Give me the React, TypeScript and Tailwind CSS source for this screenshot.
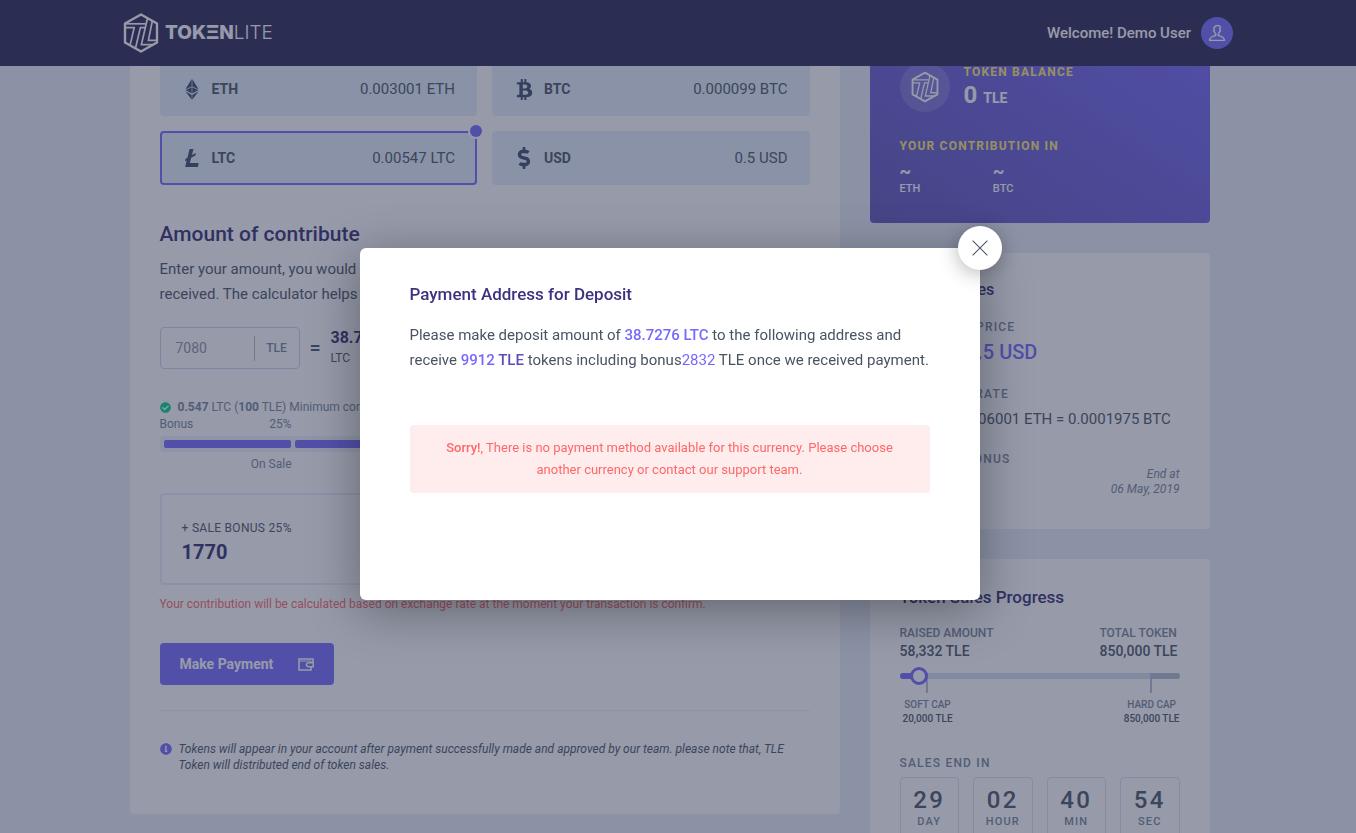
import type { ReactNode } from "react";
import { FaBtc, FaCheckCircle, FaDollarSign, FaInfoCircle } from "react-icons/fa";
import { TfiClose, TfiUser } from "react-icons/tfi";

function LogoMark({ className }: { className?: string }) {
  return (
    <svg viewBox="0 0 36 40" className={className} fill="none" stroke="currentColor" aria-hidden="true">
      <path d="M18 1.5 34 10.5V29.5L18 38.5 2 29.5V10.5Z" strokeWidth="2.4" strokeLinejoin="round" />
      <path d="M2.5 10.8H22.5" strokeWidth="1.7" />
      <path d="M2.5 14.6H11.2L7.2 31.5" strokeWidth="1.7" />
      <path d="M22 14.6H17.4L12.6 34.8" strokeWidth="1.7" />
      <path d="M24.4 5.5 18.4 31.6H30" strokeWidth="1.7" />
      <path d="M29.3 8 25.4 27.4H33.5" strokeWidth="1.7" />
    </svg>
  );
}

function EthIcon() {
  return (
    <svg viewBox="0 0 14 21" className="h-[21px] w-[14px]" fill="currentColor" aria-hidden="true">
      <path d="M6.7 0 .4 10.3 6.7 7.6ZM7.3 0V7.6L13.6 10.3ZM6.7 8.3.6 10.9 6.7 14.5ZM7.3 8.3V14.5L13.4 10.9ZM.4 12.3 6.7 16V20.8ZM13.6 12.3 7.3 16V20.8Z" />
    </svg>
  );
}

function LtcIcon() {
  return (
    <svg viewBox="0 0 14 18" className="h-[18px] w-[14px]" fill="currentColor" aria-hidden="true">
      <path d="M4.6 0H8.5L6.9 6.1 11 3.9 10.4 6.5 6.2 8.8 4.8 14H13.6L12.9 18H.2L1.7 11.4 0 12.3.6 9.7 2.4 8.7Z" />
    </svg>
  );
}

function WalletIcon() {
  return (
    <svg viewBox="0 0 16 13" className="h-[13px] w-4" fill="none" stroke="currentColor" aria-hidden="true">
      <path d="M15 4V1H1V12H13V9" strokeWidth="1.6" />
      <path d="M1 3H13V4.5" strokeWidth="1" />
      <path d="M15.2 4.8H10.5A2 2 0 0 0 10.5 8.8H15.2Z" strokeWidth="1.5" />
    </svg>
  );
}

type Option = { code: string; rate: string; icon: ReactNode; checked?: boolean };

const options: Option[] = [
  { code: "ETH", rate: "0.003001 ETH", icon: <EthIcon /> },
  { code: "BTC", rate: "0.000099 BTC", icon: <FaBtc size={21} /> },
  { code: "LTC", rate: "0.00547 LTC", icon: <LtcIcon />, checked: true },
  { code: "USD", rate: "0.5 USD", icon: <FaDollarSign size={22} /> },
];

function CurrencyOption({ code, rate, icon, checked }: Option) {
  return (
    <label
      className={`relative flex h-[54px] items-center gap-2 rounded bg-[#e6effb] pr-[22px] pl-5 ${
        checked ? "shadow-[inset_0_0_0_2px_#7668fe]" : ""
      }`}
    >
      <input type="radio" name="currency" defaultChecked={checked} className="sr-only" />
      <span className="flex w-6 justify-center text-[#3d4a68]">{icon}</span>
      <span className="text-sm font-bold text-[#495463]">{code}</span>
      <span className="ml-auto text-[15px] text-[#495463]">{rate}</span>
      {checked && (
        <span className="absolute -top-1.5 -right-[5px] size-3 rounded-full bg-[#7668fe] shadow-[0_0_0_2px_#fff]" />
      )}
    </label>
  );
}

function Caption({ children }: { children: ReactNode }) {
  return <h3 className="text-xs leading-5 font-medium tracking-widest text-[#758698] uppercase">{children}</h3>;
}

const countdown = [
  ["29", "Day"],
  ["02", "Hour"],
  ["40", "Min"],
  ["54", "Sec"],
];

function Header() {
  return (
    <header className="fixed inset-x-0 top-0 z-10 h-[66px] bg-[#2b2552]">
      <div className="mx-auto flex h-full max-w-[1110px] items-center justify-between">
        <a href="#" className="flex items-center text-white">
          <LogoMark className="h-10 w-9" />
          <span className="ml-1.5 font-[Inter,sans-serif] text-[19px] leading-6">
            <span className="font-extrabold">TOKΞN</span>
            <span className="font-light">LITE</span>
          </span>
        </a>
        <button type="button" className="flex items-center gap-2.5 text-[15px] font-medium text-white">
          <span>Welcome! Demo User</span>
          <span className="flex size-8 items-center justify-center rounded-full bg-[#7668fe]">
            <TfiUser size={16} stroke="currentColor" strokeWidth="0.6" />
          </span>
        </button>
      </div>
    </header>
  );
}

function ContributeCard() {
  return (
    <section className="rounded bg-white px-[30px] pt-[62px] pb-[41px]">
      <div className="grid grid-cols-2 gap-[15px]">
        {options.map((o) => (
          <CurrencyOption key={o.code} {...o} />
        ))}
      </div>

      <h2 className="mt-9 text-[21px] leading-[26px] font-medium text-[#342d6e]">Amount of contribute</h2>
      <p className="mt-2.5 text-[15px] leading-[25px]">
        Enter your amount, you would like to contribute and calculate the amount of token you will received. The
        calculator helps to convert required currency to tokens.
      </p>

      <div className="mt-5 flex h-[42px] items-center">
        <label className="flex h-full w-[140px] items-center rounded border border-[#ccd4ee]">
          <input
            type="text"
            defaultValue="7080"
            className="h-full w-[93px] min-w-0 bg-transparent pl-[15px] text-sm text-[#8b92a5] outline-none"
          />
          <span className="flex h-[25px] flex-1 items-center justify-center border-l border-[#b1becc] text-xs font-medium text-[#758698]">
            TLE
          </span>
        </label>
        <span className="w-[31px] text-center text-xl font-medium text-[#495463]">=</span>
        <div>
          <p className="text-base leading-5 font-bold text-[#342d6e]">38.7276</p>
          <p className="text-xs leading-5">LTC</p>
        </div>
      </div>

      <p className="mt-[30px] flex items-center text-xs leading-4 text-[#758698]">
        <FaCheckCircle size={11} className="mr-[7px] text-[#00d285]" />
        <span>
          <b className="font-bold">0.547</b> LTC (<b className="font-bold">100</b> TLE) Minimum contribution amount is
          required.
        </span>
      </p>

      <div className="text-xs text-[#758698]">
        <div className="flex w-[132px] justify-between py-px leading-4">
          <span>Bonus</span>
          <span>25%</span>
        </div>
        <div className="mt-[3px] flex gap-1 rounded-sm bg-[#eff1f9] p-1">
          <span className="h-2 w-[127px] rounded-xs bg-[#7668fe]" />
          <span className="h-2 flex-1 rounded-xs bg-[#7668fe]" />
        </div>
        <p className="mt-1 w-[132px] text-right leading-4">On Sale</p>
      </div>

      <div className="mt-[21px] rounded border-2 border-[#e6effb] px-5 pt-[22px] pb-[18px]">
        <p className="text-xs leading-[22px] tracking-wide text-[#495463]">+ SALE BONUS 25%</p>
        <p className="text-xl leading-[26px] font-bold text-[#342d6e]">1770</p>
      </div>
      <p className="mt-[9px] text-xs leading-5 text-[#ff6868]">
        Your contribution will be calculated based on exchange rate at the moment your transaction is confirm.
      </p>

      <button
        type="button"
        className="mt-[29px] flex h-[42px] w-[174px] items-center justify-between rounded bg-[#7668fe] px-5 text-sm font-bold text-white"
      >
        Make Payment
        <WalletIcon />
      </button>

      <hr className="mt-[25px] border-[#e6effb]" />
      <p className="mt-[30px] flex gap-[7px] text-xs leading-4 italic">
        <FaInfoCircle size={12} className="mt-0.5 shrink-0 text-[#7668fe]" />
        <span>
          Tokens will appear in your account after payment successfully made and approved by our team. please note
          that, TLE Token will distributed end of token sales.
        </span>
      </p>
    </section>
  );
}

function BalanceCard() {
  return (
    <section className="rounded bg-linear-to-tr from-[#5f54b8] to-[#7668fe] px-[30px] pt-[62px] pb-[26px] text-white">
      <div className="flex items-center gap-3.5">
        <span className="flex size-[50px] items-center justify-center rounded-full bg-white/15">
          <LogoMark className="h-8 w-7" />
        </span>
        <div className="pb-1">
          <h2 className="text-xs leading-5 font-bold tracking-widest text-[#ffeb70]">TOKEN BALANCE</h2>
          <p className="text-2xl leading-[26px] font-bold">
            0 <span className="text-sm">TLE</span>
          </p>
        </div>
      </div>
      <h2 className="mt-6 text-xs leading-5 font-bold tracking-widest text-[#ffeb70]">YOUR CONTRIBUTION IN</h2>
      <div className="mt-[5px] grid grid-cols-3">
        {["ETH", "BTC"].map((c) => (
          <p key={c} className="text-[11px] leading-4 font-medium">
            <span className="block text-lg leading-5 font-bold">~</span>
            {c}
          </p>
        ))}
      </div>
    </section>
  );
}

function SalesCard() {
  return (
    <section className="rounded bg-white px-[30px] pt-[25px] pb-8">
      <h2 className="text-base leading-6 font-medium text-[#342d6e]">Tokens Sales</h2>
      <div className="mt-[15px]">
        <Caption>TLE Token Price</Caption>
        <p className="text-xl leading-[30px] font-medium text-[#7668fe]">1 TLE =0.5 USD</p>
      </div>
      <div className="mt-[17px]">
        <Caption>Exchange Rate</Caption>
        <p className="mt-0.5 text-[15px] leading-[26px]">1 TLE =0.0006001 ETH = 0.0001975 BTC</p>
      </div>
      <div className="mt-[17px]">
        <Caption>Current Bonus</Caption>
        <div className="-mt-0.5 flex items-center justify-between">
          <span className="text-xl font-medium text-[#7668fe]">25%</span>
          <span className="text-right text-xs leading-[15px] text-[#758698] italic">
            End at
            <br />
            06 May, 2019
          </span>
        </div>
      </div>
    </section>
  );
}

function ProgressCard() {
  return (
    <section className="rounded bg-white px-[30px] pt-[25px] pb-[30px]">
      <h2 className="text-[17px] leading-[26px] font-medium text-[#342d6e]">Token Sales Progress</h2>
      <div className="mt-3.5 flex justify-between pr-0.5 text-sm leading-[18px] font-medium">
        <p>
          <span className="block text-xs leading-[18px] text-[#758698]">RAISED AMOUNT</span>
          58,332 TLE
        </p>
        <p>
          <span className="block text-xs leading-[18px] text-[#758698]">TOTAL TOKEN</span>
          850,000 TLE
        </p>
      </div>
      <div className="relative mt-[13px] flex h-1.5 rounded-full bg-[#d5dfec]">
        <span className="w-[19px] rounded-l-full bg-[#7668fe]" />
        <span className="ml-auto w-[29px] rounded-r-full bg-[#b1becc]" />
        <span className="absolute top-0 left-[26px] h-5 w-0.5 bg-[#b7bdd4]" />
        <span className="absolute top-0 right-7 h-5 w-0.5 bg-[#b7bdd4]" />
        <span className="absolute -top-1.5 left-2.5 size-[18px] rounded-full border-3 border-[#7668fe] bg-white" />
      </div>
      <div className="mt-[19px] flex justify-between pl-[3px] text-center text-[10px] leading-3.5 font-medium">
        <p>
          <span className="block text-[#758698]">SOFT CAP</span>
          20,000 TLE
        </p>
        <p>
          <span className="block text-[#758698]">HARD CAP</span>
          850,000 TLE
        </p>
      </div>
      <div className="mt-[27px]">
        <Caption>Sales end in</Caption>
      </div>
      <div className="mt-1 grid grid-cols-4 gap-3.5">
        {countdown.map(([n, unit]) => (
          <p key={unit} className="rounded border border-[#dae3f6] py-2 text-center font-medium">
            <span className="block text-2xl leading-7 tracking-widest">{n}</span>
            <span className="block text-[11px] leading-4 tracking-widest text-[#758698] uppercase">{unit}</span>
          </p>
        ))}
      </div>
    </section>
  );
}

function PaymentDialog() {
  return (
    <div className="fixed inset-0 z-20 flex items-center justify-center bg-[#2e3553]/50 pt-[15px] pr-[17px]">
      <div
        role="dialog"
        aria-modal="true"
        aria-labelledby="payment-title"
        className="relative w-full max-w-[620px] rounded-md bg-white px-[50px] pt-[34px] pb-[107px] shadow-[0_10px_50px_rgba(0,0,0,0.35)]"
      >
        <button
          type="button"
          aria-label="Close"
          className="absolute -top-[22px] -right-[22px] flex size-11 items-center justify-center rounded-full bg-white text-[#495463] shadow-[0_3px_20px_rgba(0,0,0,0.3)]"
        >
          <TfiClose size={18} />
        </button>
        <h2 id="payment-title" className="text-[17px] leading-6 font-medium text-[#3c3380]">
          Payment Address for Deposit
        </h2>
        <p className="mt-[17px] text-[15px] leading-[25px]">
          Please make deposit amount of <b className="font-medium text-[#7668fe]">38.7276 LTC</b> to the following
          address and receive{" "}
          <b className="font-medium text-[#7668fe]">
            9912 <span className="text-[#5b4eb5]">TLE</span>
          </b>{" "}
          tokens including bonus<span className="text-[#7668fe]">2832</span> TLE once we received payment.
        </p>
        <p
          role="alert"
          className="mt-[52px] rounded bg-[#ffecec] px-[30px] py-3 text-center text-[13px] leading-[22px] text-[#ff6868]"
        >
          <b className="font-medium">Sorry!</b>, There is no payment method available for this currency. Please choose
          another currency or contact our support team.
        </p>
      </div>
    </div>
  );
}

export default function App() {
  return (
    <div className="h-screen overflow-hidden bg-[#eaeff9] font-[Roboto,sans-serif] text-[#495463]">
      <Header />
      <main className="pr-[17px]">
        <div className="mx-auto grid max-w-[1080px] grid-cols-[minmax(0,1fr)_340px] items-start gap-[30px]">
          <ContributeCard />
          <aside className="grid gap-[30px]">
            <BalanceCard />
            <SalesCard />
            <ProgressCard />
          </aside>
        </div>
      </main>
      <PaymentDialog />
    </div>
  );
}
